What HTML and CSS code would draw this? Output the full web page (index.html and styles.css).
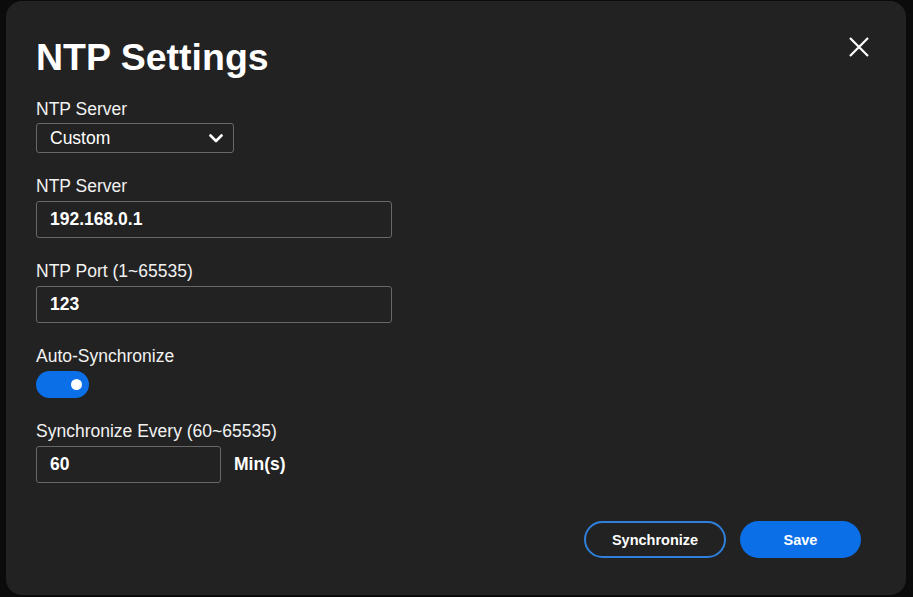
FILE: index.html
```html
<!DOCTYPE html>
<html lang="en">
<head>
<meta charset="utf-8">
<title>NTP Settings</title>
<link rel="stylesheet" href="styles.css">
</head>
<body>
<div class="dialog">
  <div class="header">
    <h1 class="title">NTP Settings</h1>
    <button class="close" aria-label="Close">
      <svg width="20" height="20" viewBox="0 0 20 20"><path d="M1 1 L19 19 M19 1 L1 19" stroke="#fff" stroke-width="2.2" stroke-linecap="butt" fill="none"/></svg>
    </button>
  </div>
  <div class="form">
    <div class="field">
      <div class="label first">NTP Server</div>
      <div class="select">
        <span>Custom</span>
        <svg width="14" height="9" viewBox="0 0 14 9"><path d="M1.5 1.5 L7 7 L12.5 1.5" stroke="#fff" stroke-width="2.6" fill="none" stroke-linecap="round" stroke-linejoin="round"/></svg>
      </div>
    </div>
    <div class="field">
      <div class="label">NTP Server</div>
      <input class="input wide" type="text" value="192.168.0.1">
    </div>
    <div class="field">
      <div class="label">NTP Port (1~65535)</div>
      <input class="input wide" type="text" value="123">
    </div>
    <div class="field">
      <div class="label">Auto-Synchronize</div>
      <div class="toggle"><span class="knob"></span></div>
    </div>
    <div class="field">
      <div class="label">Synchronize Every (60~65535)</div>
      <div class="row">
        <input class="input narrow" type="text" value="60">
        <span class="unit">Min(s)</span>
      </div>
    </div>
  </div>
  <div class="actions">
    <button class="btn btn-outline">Synchronize</button>
    <button class="btn btn-primary">Save</button>
  </div>
</div>
</body>
</html>
```
FILE: styles.css
```css
* { box-sizing: border-box; }
html, body {
  margin: 0;
  padding: 0;
  background: #0b0b0b;
  font-family: "Liberation Sans", Arial, sans-serif;
  color: #fff;
}
.dialog {
  margin: 1px 0 0 6px;
  width: 900px;
  height: 594px;
  background: #222222;
  border-radius: 16px;
  padding: 34px 45px 0 30px;
  display: flex;
  flex-direction: column;
}
.header {
  display: flex;
  justify-content: space-between;
  align-items: flex-start;
}
.title {
  margin: 0;
  font-size: 37.5px;
  line-height: 44px;
  font-weight: bold;
}
.close {
  background: none;
  border: 0;
  padding: 0;
  margin: 2px -8px 0 0;
  width: 20px;
  height: 20px;
  display: block;
  cursor: pointer;
}
.close svg { display: block; }
.form {
  margin-top: 20px;
  display: flex;
  flex-direction: column;
  gap: 22px;
}
.field {
  display: flex;
  flex-direction: column;
  align-items: flex-start;
}
.field + .field + .field { margin-top: 1px; }
.label {
  font-size: 17.5px;
  line-height: 20px;
  margin-bottom: 5px;
  color: #f2f2f2;
}
.label.first { margin-bottom: 4px; }
.field:first-child + .field { margin-top: 1px; }
.select {
  width: 198px;
  height: 30px;
  border: 1px solid #686868;
  border-radius: 3px;
  display: flex;
  align-items: center;
  justify-content: space-between;
  padding: 0 10px 0 13px;
  font-size: 17.5px;
}
.select svg { display: block; margin-top: 1px; }
.input {
  height: 37px;
  border: 1px solid #686868;
  border-radius: 3px;
  background: transparent;
  color: #fff;
  font-family: "Liberation Sans", Arial, sans-serif;
  font-size: 17.5px;
  font-weight: bold;
  padding: 0 13px;
  outline: none;
}
.wide { width: 356px; }
.narrow { width: 185px; }
.row {
  display: flex;
  align-items: center;
  gap: 13px;
}
.unit {
  font-size: 17.5px;
  font-weight: bold;
}
.toggle {
  width: 53px;
  height: 27px;
  border-radius: 14px;
  background: #0b6fe8;
  display: flex;
  align-items: center;
  justify-content: flex-end;
  padding-right: 7.5px;
}
.knob {
  width: 11px;
  height: 11px;
  border-radius: 50%;
  background: #fff;
}
.actions {
  margin-top: 38px;
  display: flex;
  justify-content: flex-end;
  gap: 14px;
}
.btn {
  height: 37px;
  border-radius: 18.5px;
  font-family: "Liberation Sans", Arial, sans-serif;
  font-size: 14.5px;
  font-weight: bold;
  color: #fff;
  cursor: pointer;
}
.btn-outline {
  width: 142px;
  background: transparent;
  border: 2px solid #2f7fdc;
}
.btn-primary {
  width: 121px;
  background: #0b6fe8;
  border: 0;
}
```
